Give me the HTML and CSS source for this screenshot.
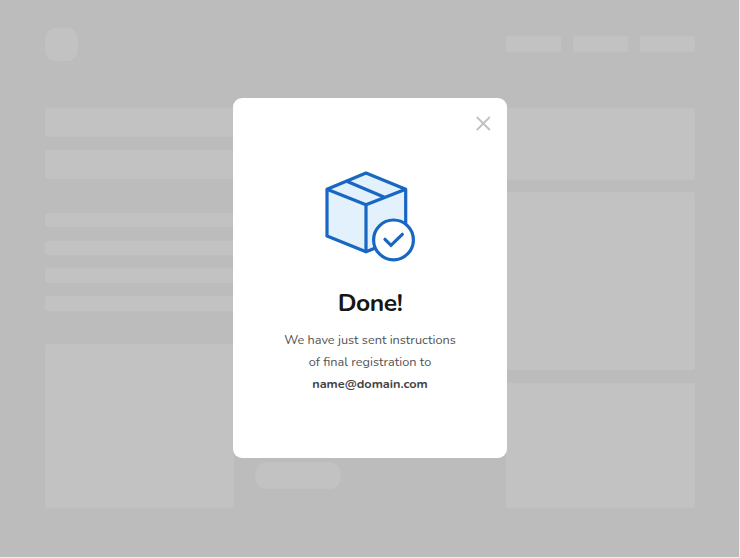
FILE: index.html
```html
<!DOCTYPE html>
<html lang="en">
<head>
<meta charset="utf-8">
<title>Registration</title>
<link rel="stylesheet" href="styles.css">
</head>
<body>
<div class="page">
  <header class="header">
    <div class="logo block"></div>
    <nav class="nav"><span class="block"></span><span class="block"></span><span class="block"></span></nav>
  </header>
  <main class="content">
    <section class="left">
      <div class="block title"></div>
      <div class="block title"></div>
      <div class="lines">
        <div class="block"></div><div class="block"></div><div class="block"></div><div class="block"></div>
      </div>
      <div class="block fill"></div>
    </section>
    <section class="middle"><div class="block pill"></div></section>
    <section class="right">
      <div class="block small"></div>
      <div class="block large"></div>
      <div class="block fill"></div>
    </section>
  </main>
</div>
<div class="overlay">
  <div class="modal" role="dialog" aria-labelledby="modal-title">
    <button class="close" aria-label="Close">
      <svg width="16" height="16" viewBox="0 0 16 16"><path d="M2.3 2.5 14.3 14.5M14.3 2.5 2.3 14.5"/></svg>
    </button>
    <svg class="parcel" width="92" height="92" viewBox="0 0 92 92">
      <path class="box" d="M42 3 81.7 19.3V66L42 81.8 3 66V19.3Z"/>
      <path class="edge" d="M3 19.3 42 34.7 81.7 19.3M42 34.7V81.8M22.7 11.2 60.5 27.2"/>
      <circle class="badge" cx="69.5" cy="69.9" r="19.9"/>
      <path class="tick" d="M61 69.3 67 75.3 78.3 64.3"/>
    </svg>
    <h1 class="heading" id="modal-title">Done!</h1>
    <p class="message">We have just sent instructions<br>of final registration to<br><strong>name@domain.com</strong></p>
  </div>
</div>
</body>
</html>
```
FILE: styles.css
```css
* { box-sizing: border-box; }
body {
  margin: 0;
  width: 740px;
  height: 558px;
  overflow: hidden;
  background: #efefef;
  font-family: Nunito, Lato, sans-serif;
}
.page {
  width: 739px;
  height: 557px;
  padding: 27.5px 44px 49px 44.5px;
  background: #bcbcbc;
}
.block { background: #c2c2c2; border-radius: 2px; }
.header {
  display: flex;
  justify-content: space-between;
  align-items: center;
  height: 33px;
}
.logo { width: 33.5px; height: 33px; border-radius: 11px; }
.nav { display: flex; gap: 12.2px; }
.nav .block { width: 55px; height: 16px; }
.content {
  display: grid;
  grid-template-columns: 189px 1fr 189px;
  height: 400.4px;
  margin-top: 47px;
}
.left, .right { display: flex; flex-direction: column; }
.left { gap: 12.5px; }
.title { height: 29.7px; }
.lines {
  display: flex;
  flex-direction: column;
  gap: 13.2px;
  margin: 20.8px 0;
}
.lines .block { height: 14.7px; }
.fill { flex: 1; }
.right { gap: 12.3px; }
.small { height: 72.3px; }
.large { height: 178.3px; }
.middle { display: flex; align-items: flex-end; padding: 0 0 18.7px 21.8px; }
.pill { width: 86px; height: 27px; border-radius: 12px; }
.overlay {
  position: absolute;
  top: 0;
  left: 0;
  width: 740px;
  height: 558px;
  display: flex;
  align-items: flex-start;
  justify-content: center;
  padding-top: 98px;
}
.modal {
  display: flex;
  flex-direction: column;
  align-items: center;
  width: 274px;
  height: 360.4px;
  padding-top: 17px;
  border-radius: 9px;
  background: #fff;
}
.close {
  display: block;
  align-self: flex-end;
  width: 16px;
  height: 16px;
  margin-right: 16px;
  padding: 0;
  border: 0;
  background: none;
}
.close svg { display: block; }
.close path { stroke: #c1c1c1; stroke-width: 1.8; stroke-linecap: round; }
.parcel { display: block; margin-top: 39px; fill: none; stroke: #1767c3; stroke-width: 3.2; }
.box { fill: #e3f1fc; stroke-linejoin: round; }
.badge { fill: #fff; }
.tick { stroke-linecap: round; stroke-linejoin: miter; }
.heading {
  margin: 24px 0 0;
  font-size: 24.7px;
  line-height: 35px;
  font-weight: 700;
  letter-spacing: -0.45px;
  color: #161616;
}
.message {
  margin: 8px 0 0;
  font-size: 12.73px;
  line-height: 22px;
  text-align: center;
  color: #535353;
}
.message strong { color: #444; }
```
